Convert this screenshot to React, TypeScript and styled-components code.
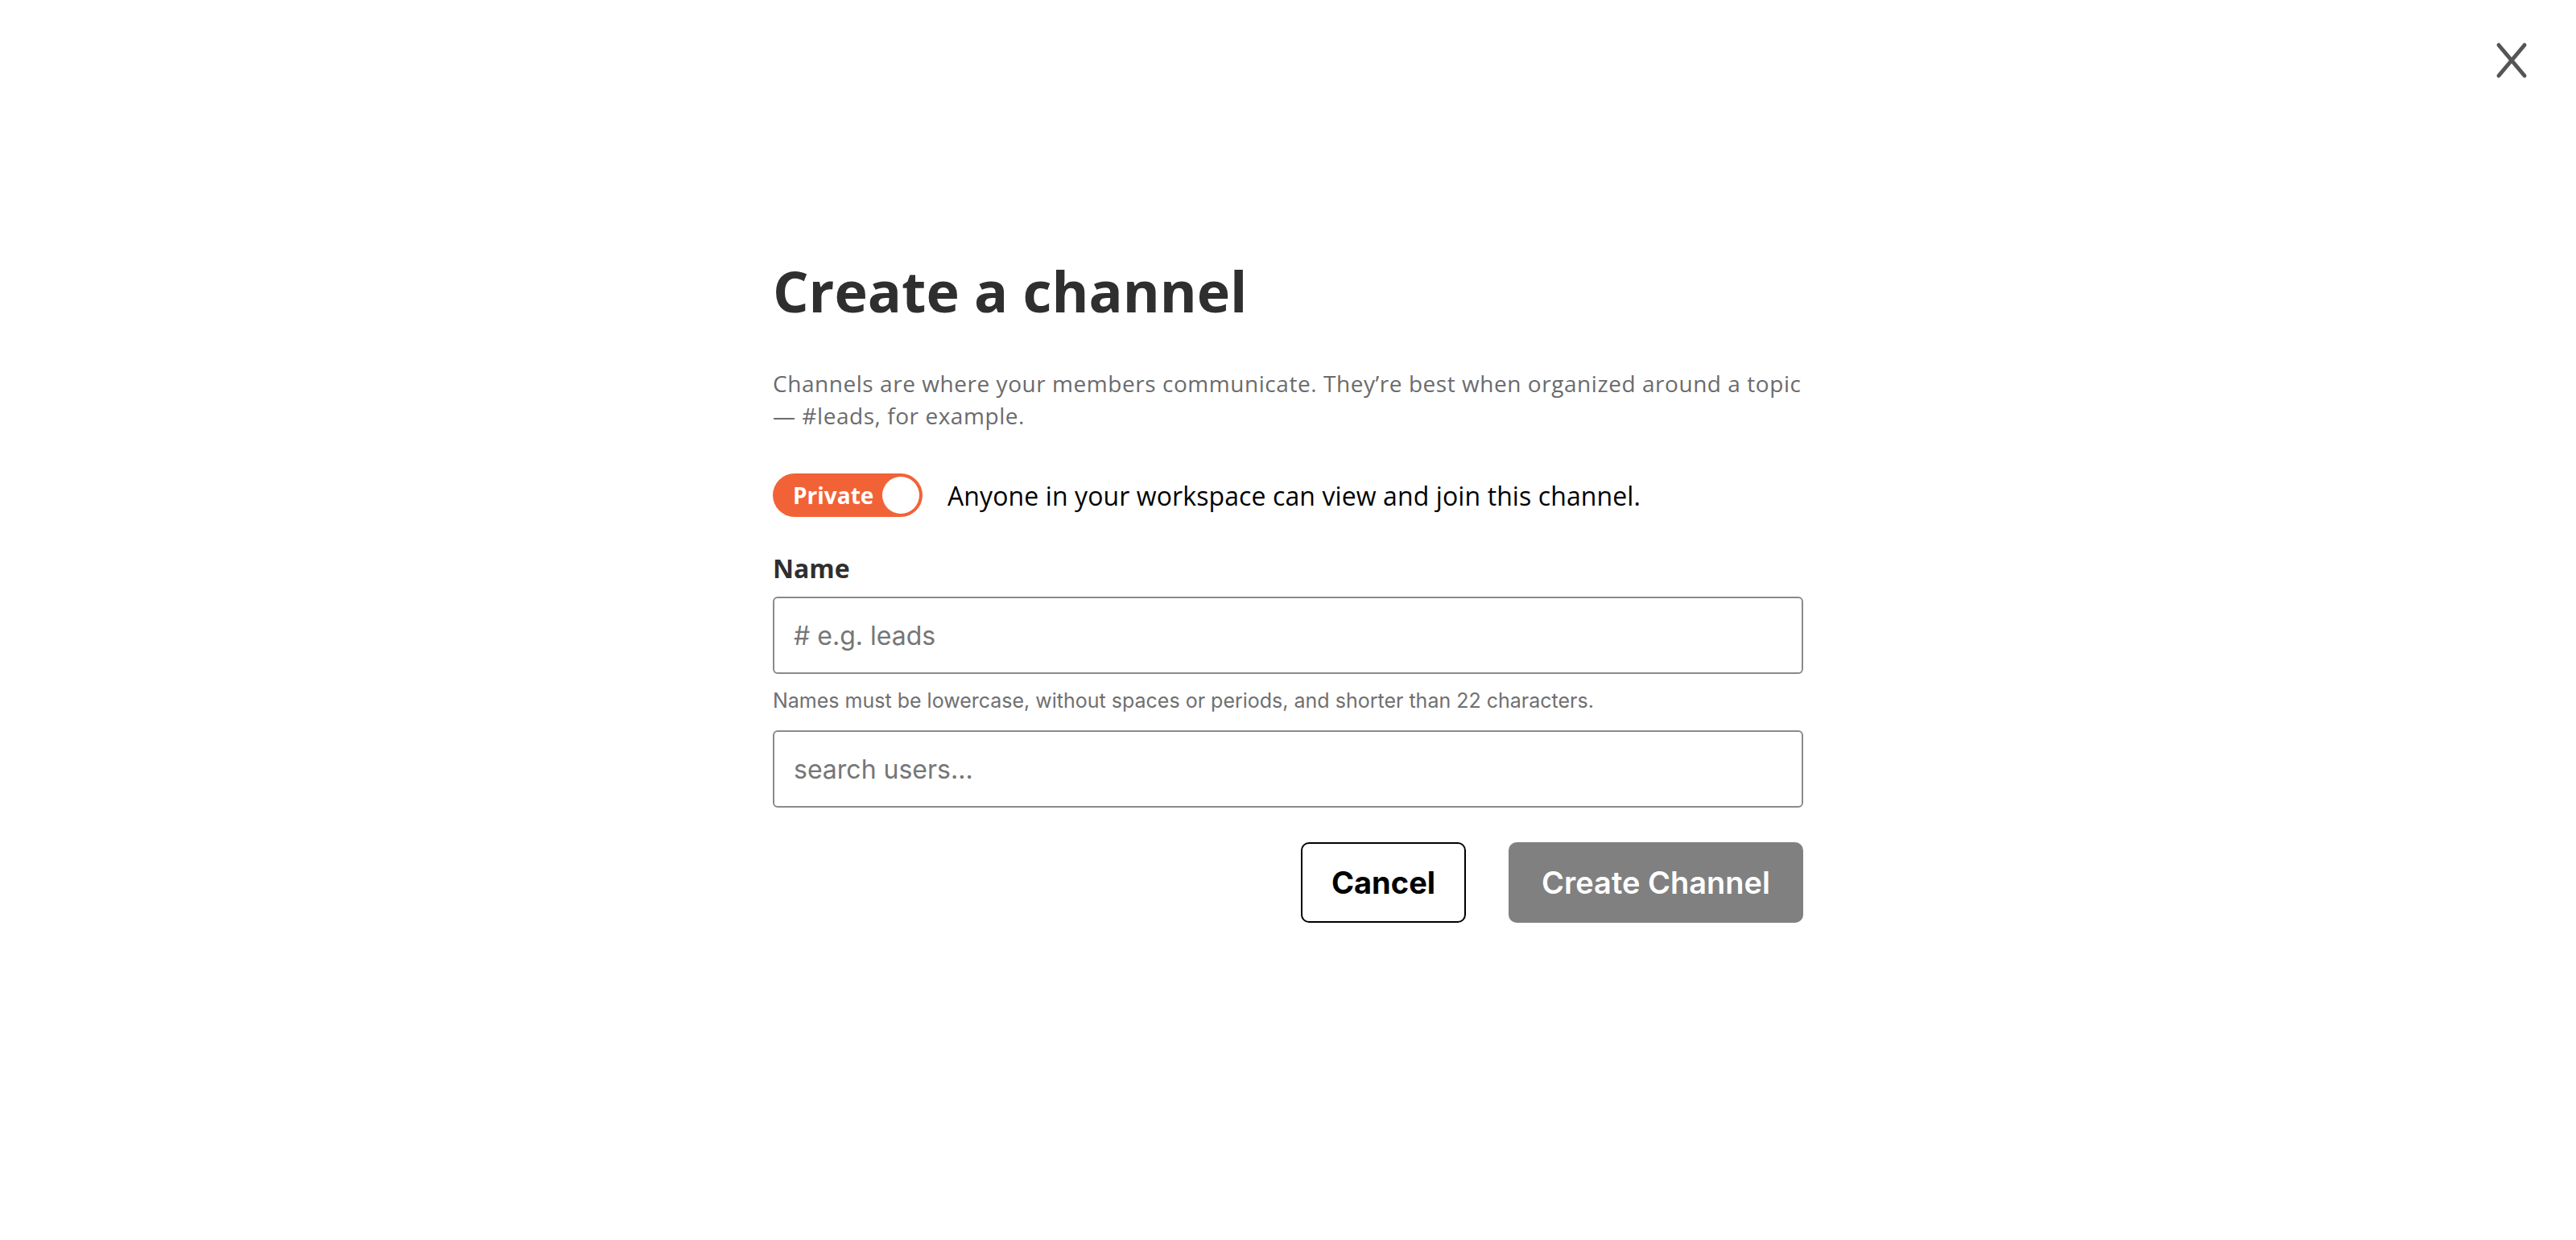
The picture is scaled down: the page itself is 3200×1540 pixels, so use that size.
import React from "react";
import styled, { createGlobalStyle } from "styled-components";

const GlobalStyle = createGlobalStyle`
  html, body { margin: 0; padding: 0; background: #ffffff; }
  * { box-sizing: border-box; }
`;

const Page = styled.div`
  min-height: 100vh;
  background: #ffffff;
  display: flex;
  flex-direction: column;
`;

const CloseBar = styled.div`
  display: flex;
  justify-content: flex-end;
  padding: 52px 60px 0 0;
`;

const CloseButton = styled.button`
  width: 40px;
  height: 46px;
  padding: 0;
  border: 0;
  background: none;
  display: flex;
  align-items: center;
  justify-content: center;
  cursor: pointer;
`;

const Content = styled.main`
  width: 1280px;
  margin: 0 auto;
  padding-top: 223px;
  display: flex;
  flex-direction: column;
`;

const Title = styled.h1`
  margin: 0;
  font-family: "Open Sans", "Noto Sans", sans-serif;
  font-weight: 700;
  font-size: 70px;
  line-height: 80px;
  color: #2f2f2f;
`;

const Description = styled.p`
  margin: 55px 0 0;
  font-family: "Open Sans", "Noto Sans", sans-serif;
  font-size: 28px;
  line-height: 40px;
  letter-spacing: 0.55px;
  color: #6b6b6b;
`;

const PrivacyRow = styled.div`
  margin-top: 52px;
  display: flex;
  align-items: center;
  gap: 31px;
`;

const Toggle = styled.button<{ $on: boolean }>`
  width: 186px;
  height: 54px;
  border-radius: 27px;
  border: 0;
  padding: 0 4px 0 25px;
  background: ${(p) => (p.$on ? "#f26237" : "#cccccc")};
  display: flex;
  align-items: center;
  justify-content: space-between;
  cursor: pointer;
`;

const ToggleLabel = styled.span`
  font-family: "Open Sans", "Noto Sans", sans-serif;
  font-weight: 700;
  font-size: 28px;
  color: #ffffff;
`;

const Knob = styled.span`
  width: 46px;
  height: 46px;
  border-radius: 50%;
  background: #ffffff;
`;

const PrivacyText = styled.span`
  font-family: "Open Sans", "Noto Sans", sans-serif;
  font-size: 32px;
  letter-spacing: 0.1px;
  color: #000000;
`;

const FieldLabel = styled.label`
  margin-top: 41px;
  font-family: "Open Sans", "Noto Sans", sans-serif;
  font-weight: 700;
  font-size: 32px;
  line-height: 46px;
  color: #2f2f2f;
`;

const TextInput = styled.input<{ $gap: number }>`
  margin-top: ${(p) => p.$gap}px;
  width: 100%;
  height: 96px;
  border: 2px solid #8a8a8a;
  border-radius: 6px;
  padding: 0 24px;
  font-family: Inter, Lato, sans-serif;
  font-size: 32px;
  color: #333;
  outline: none;
  &::placeholder { color: #767676; }
`;

const Hint = styled.div`
  margin-top: 16px;
  font-family: Inter, Lato, sans-serif;
  font-size: 25px;
  line-height: 34px;
  color: #707070;
`;

const Actions = styled.div`
  margin-top: 43px;
  display: flex;
  justify-content: flex-end;
  gap: 53px;
`;

const Button = styled.button<{ $primary?: boolean }>`
  height: 100px;
  width: ${(p) => (p.$primary ? 366 : 205)}px;
  border-radius: 10px;
  border: ${(p) => (p.$primary ? "0" : "2px solid #000000")};
  background: ${(p) => (p.$primary ? "#808080" : "#ffffff")};
  color: ${(p) => (p.$primary ? "#ffffff" : "#000000")};
  font-family: Inter, Lato, sans-serif;
  font-weight: ${(p) => (p.$primary ? 600 : 700)};
  font-size: 38px;
  cursor: pointer;
`;

export default function App() {
  return (
    <Page>
      <GlobalStyle />
      <CloseBar>
        <CloseButton aria-label="Close">
          <svg width="40" height="46" viewBox="0 0 40 46">
            <line x1="4" y1="4" x2="36" y2="42" stroke="#555555" strokeWidth="5" strokeLinecap="round" />
            <line x1="36" y1="4" x2="4" y2="42" stroke="#555555" strokeWidth="5" strokeLinecap="round" />
          </svg>
        </CloseButton>
      </CloseBar>
      <Content>
        <Title>Create a channel</Title>
        <Description>
          Channels are where your members communicate. They’re best when organized around a topic — #leads, for example.
        </Description>
        <PrivacyRow>
          <Toggle $on={true}>
            <ToggleLabel>Private</ToggleLabel>
            <Knob />
          </Toggle>
          <PrivacyText>Anyone in your workspace can view and join this channel.</PrivacyText>
        </PrivacyRow>
        <FieldLabel htmlFor="channel-name">Name</FieldLabel>
        <TextInput id="channel-name" $gap={12} placeholder="# e.g. leads" />
        <Hint>Names must be lowercase, without spaces or periods, and shorter than 22 characters.</Hint>
        <TextInput $gap={20} placeholder="search users..." />
        <Actions>
          <Button>Cancel</Button>
          <Button $primary>Create Channel</Button>
        </Actions>
      </Content>
    </Page>
  );
}
